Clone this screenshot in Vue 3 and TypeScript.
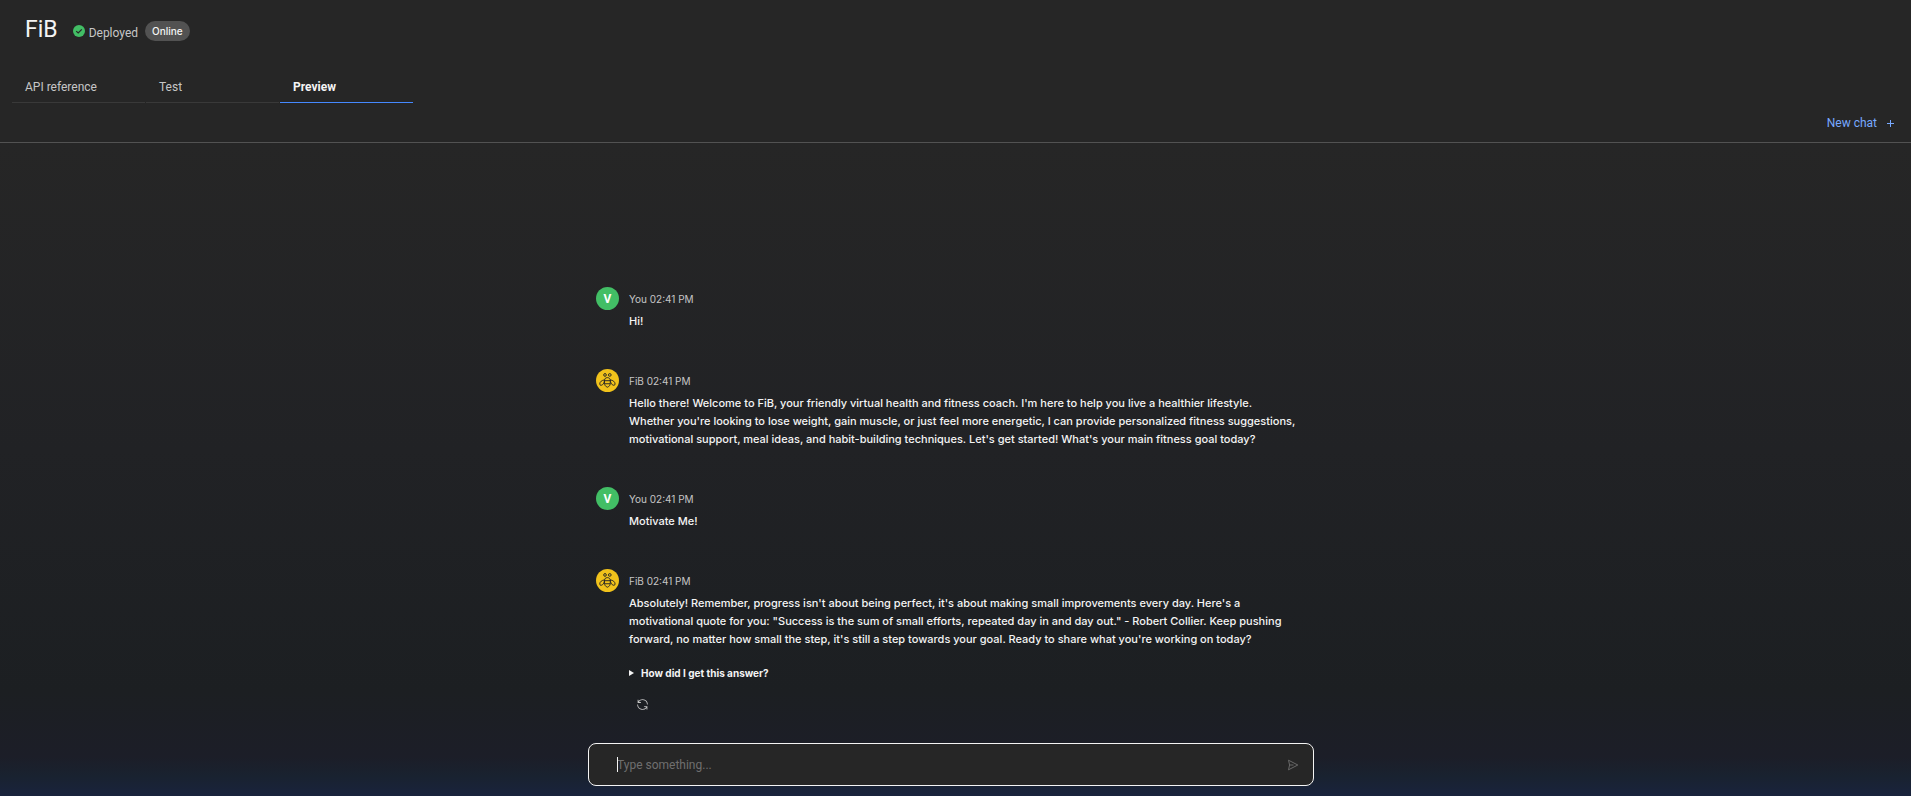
<script setup lang="ts">
import { ref } from 'vue'

interface Message {
  id: number
  author: string
  time: string
  bot: boolean
  text: string
}

const tabs = ['API reference', 'Test', 'Preview']
const activeTab = ref('Preview')
const draft = ref('')

const messages: Message[] = [
  { id: 1, author: 'You', time: '02:41 PM', bot: false, text: 'Hi!' },
  {
    id: 2,
    author: 'FiB',
    time: '02:41 PM',
    bot: true,
    text: "Hello there! Welcome to FiB, your friendly virtual health and fitness coach. I'm here to help you live a healthier lifestyle.\nWhether you're looking to lose weight, gain muscle, or just feel more energetic, I can provide personalized fitness suggestions,\nmotivational support, meal ideas, and habit-building techniques. Let's get started! What's your main fitness goal today?",
  },
  { id: 3, author: 'You', time: '02:41 PM', bot: false, text: 'Motivate Me!' },
  {
    id: 4,
    author: 'FiB',
    time: '02:41 PM',
    bot: true,
    text: "Absolutely! Remember, progress isn't about being perfect, it's about making small improvements every day. Here's a\nmotivational quote for you: \"Success is the sum of small efforts, repeated day in and day out.\" - Robert Collier. Keep pushing\nforward, no matter how small the step, it's still a step towards your goal. Ready to share what you're working on today?",
  },
]
</script>

<template>
  <div class="page">
    <header class="header">
      <div class="title-row">
        <h1 class="title">FiB</h1>
        <span class="status">
          <svg class="status-icon" viewBox="0 0 12 12" aria-hidden="true">
            <circle cx="6" cy="6" r="6" fill="#42be65" />
            <path d="M3.2 6.1 5.2 8 8.8 4.4" fill="none" stroke="#262626" stroke-width="1.2" />
          </svg>
          <span class="status-text">Deployed</span>
        </span>
        <span class="badge">Online</span>
      </div>
      <nav class="tabs" role="tablist">
        <button
          v-for="tab in tabs"
          :key="tab"
          type="button"
          role="tab"
          class="tab"
          :class="{ active: tab === activeTab }"
          :aria-selected="tab === activeTab"
          @click="activeTab = tab"
        >
          {{ tab }}
        </button>
      </nav>
      <div class="toolbar">
        <button type="button" class="new-chat">
          New chat
          <svg class="plus" viewBox="0 0 7 7" aria-hidden="true">
            <path d="M3.5 0v7M0 3.5h7" stroke="currentColor" stroke-width="1" />
          </svg>
        </button>
      </div>
    </header>

    <main class="chat">
      <div class="column">
        <article v-for="m in messages" :key="m.id" class="message">
          <svg v-if="m.bot" class="avatar" viewBox="0 0 24 24" aria-hidden="true">
            <circle cx="12" cy="12" r="12" fill="#f1c21b" />
            <g fill="none" stroke="#262626" stroke-width="1">
              <circle cx="9.4" cy="6.2" r="1.4" />
              <circle cx="14.4" cy="6.2" r="1.4" />
              <path d="M8.900 12.200c0-2 1-3.200 3-3.200s3 1.200 3 3.200v2.600c0 2-1.200 3.700-3 4.200-1.800-.5-3-2.200-3-4.200z" />
              <path d="M8.900 12.200h6M8.900 15.400h6" />
              <path d="M8.900 11.400C6.200 11.600 3.900 13.400 3.900 15.600c0 1.600 1.700 1.800 2.900.8 1.100-.9 1.900-2.600 2.100-5z" />
              <path d="M14.900 11.400c2.700.2 5 2 5 4.200 0 1.600-1.700 1.800-2.900.8-1.100-.9-1.900-2.600-2.100-5z" />
            </g>
          </svg>
          <span v-else class="avatar user">V</span>
          <div class="body">
            <p class="meta">{{ m.author }} {{ m.time }}</p>
            <p class="text">{{ m.text }}</p>
          </div>
        </article>

        <div class="extras">
          <details class="details">
            <summary>
              <svg class="marker" viewBox="0 0 5 6" aria-hidden="true"><path d="M0 0 5 3 0 6z" fill="currentColor" /></svg>
              How did I get this answer?
            </summary>
          </details>
          <button type="button" class="refresh" aria-label="Regenerate answer">
            <svg viewBox="0 0 32 32" aria-hidden="true">
              <path d="M12 10H6.780A11 11 0 0 1 27 16h2A13 13 0 0 0 6 7.680V4H4v8h8zM20 22h5.220A11 11 0 0 1 5 16H3a13 13 0 0 0 23 8.320V28h2v-8h-8z" fill="currentColor" />
            </svg>
          </button>
        </div>
      </div>

      <form class="composer" @submit.prevent>
        <div class="field">
          <span class="caret" aria-hidden="true"></span>
          <input v-model="draft" class="input" type="text" placeholder="Type something..." aria-label="Message" />
        </div>
        <button type="submit" class="send" aria-label="Send">
          <svg viewBox="0 0 12 12" aria-hidden="true">
            <path d="M1.500 1.200 10.800 6 1.500 10.800 2.600 6zM2.600 6H6.500" fill="none" stroke="currentColor" stroke-width="0.9" />
          </svg>
        </button>
      </form>
    </main>
  </div>
</template>

<style>
body {
  margin: 0;
  background: #262626;
}
</style>

<style scoped>
.page {
  box-sizing: border-box;
  display: flex;
  flex-direction: column;
  min-height: 100vh;
  background: #262626;
  color: #f4f4f4;
  font-family: Roboto, "Liberation Sans", sans-serif;
  font-size: 12px;
  line-height: 18px;
}
button {
  padding: 0;
  border: 0;
  background: none;
  color: inherit;
  font: inherit;
  cursor: pointer;
}
p,
h1 {
  margin: 0;
}
.header {
  border-bottom: 1px solid #525252;
}
.title-row {
  display: flex;
  align-items: center;
  height: 20px;
  padding: 21px 25px 0;
}
.title {
  margin-right: 15px;
  padding-bottom: 2px;
  font-size: 23px;
  font-weight: 400;
  line-height: 20px;
}
.status {
  display: flex;
  align-items: center;
  gap: 4px;
  margin-right: 7px;
  color: #c6c6c6;
}
.status-icon {
  width: 12px;
  height: 12px;
}
.status-text {
  padding-top: 3px;
}
.badge {
  padding: 0 7px;
  border-radius: 10px;
  background: #525252;
  font-family: Inter, sans-serif;
  font-size: 10px;
  font-weight: 500;
  line-height: 20px;
}
.tabs {
  display: flex;
  gap: 1px;
  padding: 35px 12px 0;
}
.tab {
  box-sizing: border-box;
  width: 133px;
  height: 27px;
  padding: 0 13px 4px;
  border-bottom: 1px solid #393939;
  color: #c6c6c6;
  text-align: left;
}
.tab.active {
  border-bottom-color: #4589ff;
  color: #f4f4f4;
  font-weight: 700;
}
.toolbar {
  display: flex;
  justify-content: flex-end;
  padding: 11px 17px 10px;
}
.new-chat {
  display: flex;
  align-items: center;
  gap: 10px;
  color: #78a9ff;
}
.plus {
  width: 7px;
  height: 7px;
}
.chat {
  flex: 1;
  display: flex;
  flex-direction: column;
  align-items: center;
  justify-content: flex-end;
  padding: 0 9px 10px 0;
  background: linear-gradient(#262626 0%, #212225 47%, #1c1f22 84%, #1c1e28 94%, #192230 97%, #19233d 100%);
}
.column,
.composer {
  box-sizing: border-box;
  width: 100%;
  max-width: 726px;
}
.column {
  padding: 0 8px;
}
.message {
  display: flex;
  gap: 10px;
  padding-bottom: 39px;
}
.avatar {
  flex: none;
  width: 23px;
  height: 23px;
}
.user {
  border-radius: 50%;
  background: #42be65;
  color: #fff;
  font-size: 12px;
  font-weight: 700;
  line-height: 24px;
  text-align: center;
}
.meta {
  color: #c6c6c6;
  font-family: Inter, sans-serif;
  font-size: 10px;
  line-height: 24px;
}
.text {
  padding-top: 1px;
  font-family: Inter, sans-serif;
  font-size: 11px;
  font-weight: 500;
  white-space: pre-line;
}
.extras {
  display: flex;
  flex-direction: column;
  align-items: flex-start;
  gap: 16px;
  margin-top: -23px;
  padding: 0 33px 32px;
}
.details summary {
  display: flex;
  align-items: center;
  gap: 7px;
  font-family: Inter, sans-serif;
  font-size: 10px;
  font-weight: 700;
  list-style: none;
  cursor: pointer;
}
.marker {
  width: 5px;
  height: 6px;
}
.refresh {
  width: 13px;
  height: 13px;
  margin-left: 7px;
  color: #c6c6c6;
}
.refresh svg,
.send svg {
  display: block;
  width: 100%;
}
.composer {
  display: flex;
  align-items: center;
  height: 43px;
  padding: 0 14px 0 28px;
  border: 1px solid #f4f4f4;
  border-radius: 8px;
  background: #262626;
}
.field {
  position: relative;
  flex: 1;
}
.caret {
  position: absolute;
  top: 2px;
  left: 0;
  width: 1px;
  height: 15px;
  background: #f4f4f4;
}
.input {
  box-sizing: border-box;
  width: 100%;
  height: 20px;
  padding: 0;
  border: 0;
  outline: 0;
  background: none;
  color: #f4f4f4;
  font: inherit;
}
.input::placeholder {
  color: #6f6f6f;
  opacity: 1;
}
.send {
  width: 12px;
  height: 12px;
  color: #6f6f6f;
}
</style>
